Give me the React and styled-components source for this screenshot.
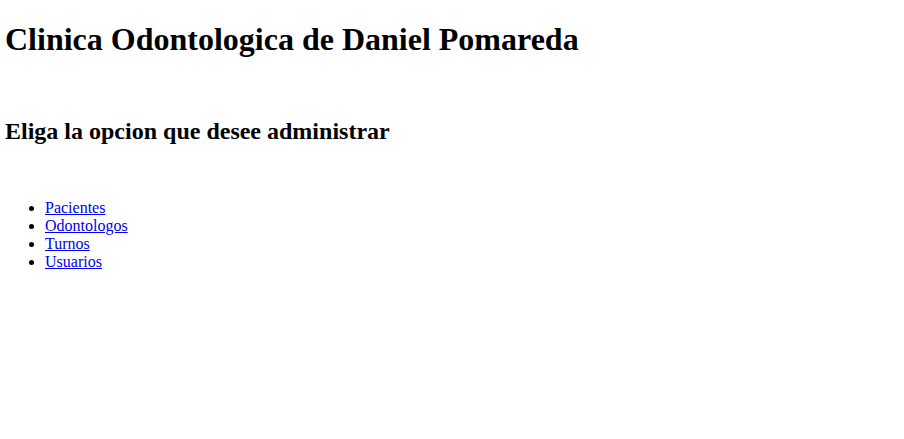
import React from 'react'
import styled, { createGlobalStyle } from 'styled-components'

const GlobalStyle = createGlobalStyle`
body {
  margin: 8px 5px;
  background: #fff;
  font-family: "Liberation Serif", "Times New Roman", serif;
  font-size: 16px;
  color: #000;
}
`;

const Page = styled.div``;

const Title = styled.h1`
font-size: 32px;
font-weight: bold;
margin: 13.44px 0 59.36px;
`;

const Subtitle = styled.h2`
font-size: 24px;
font-weight: bold;
margin: 0 0 53.92px;
`;

const Menu = styled.ul`
margin: 0 0 16px;
padding-left: 40px;
list-style: disc;
`;

const MenuLink = styled.a`
color: #0000ee;
text-decoration: underline;
`;

const options = ['Pacientes', 'Odontologos', 'Turnos', 'Usuarios'];

const App = () => {
    return (
        <Page>
            <GlobalStyle />
            <Title>Clinica Odontologica de Daniel Pomareda</Title>
            <Subtitle>Eliga la opcion que desee administrar</Subtitle>
            <Menu>
                {options.map((o) => (
                    <li key={o}><MenuLink href="#">{o}</MenuLink></li>
                ))}
            </Menu>
        </Page>
    )
}

export default App
